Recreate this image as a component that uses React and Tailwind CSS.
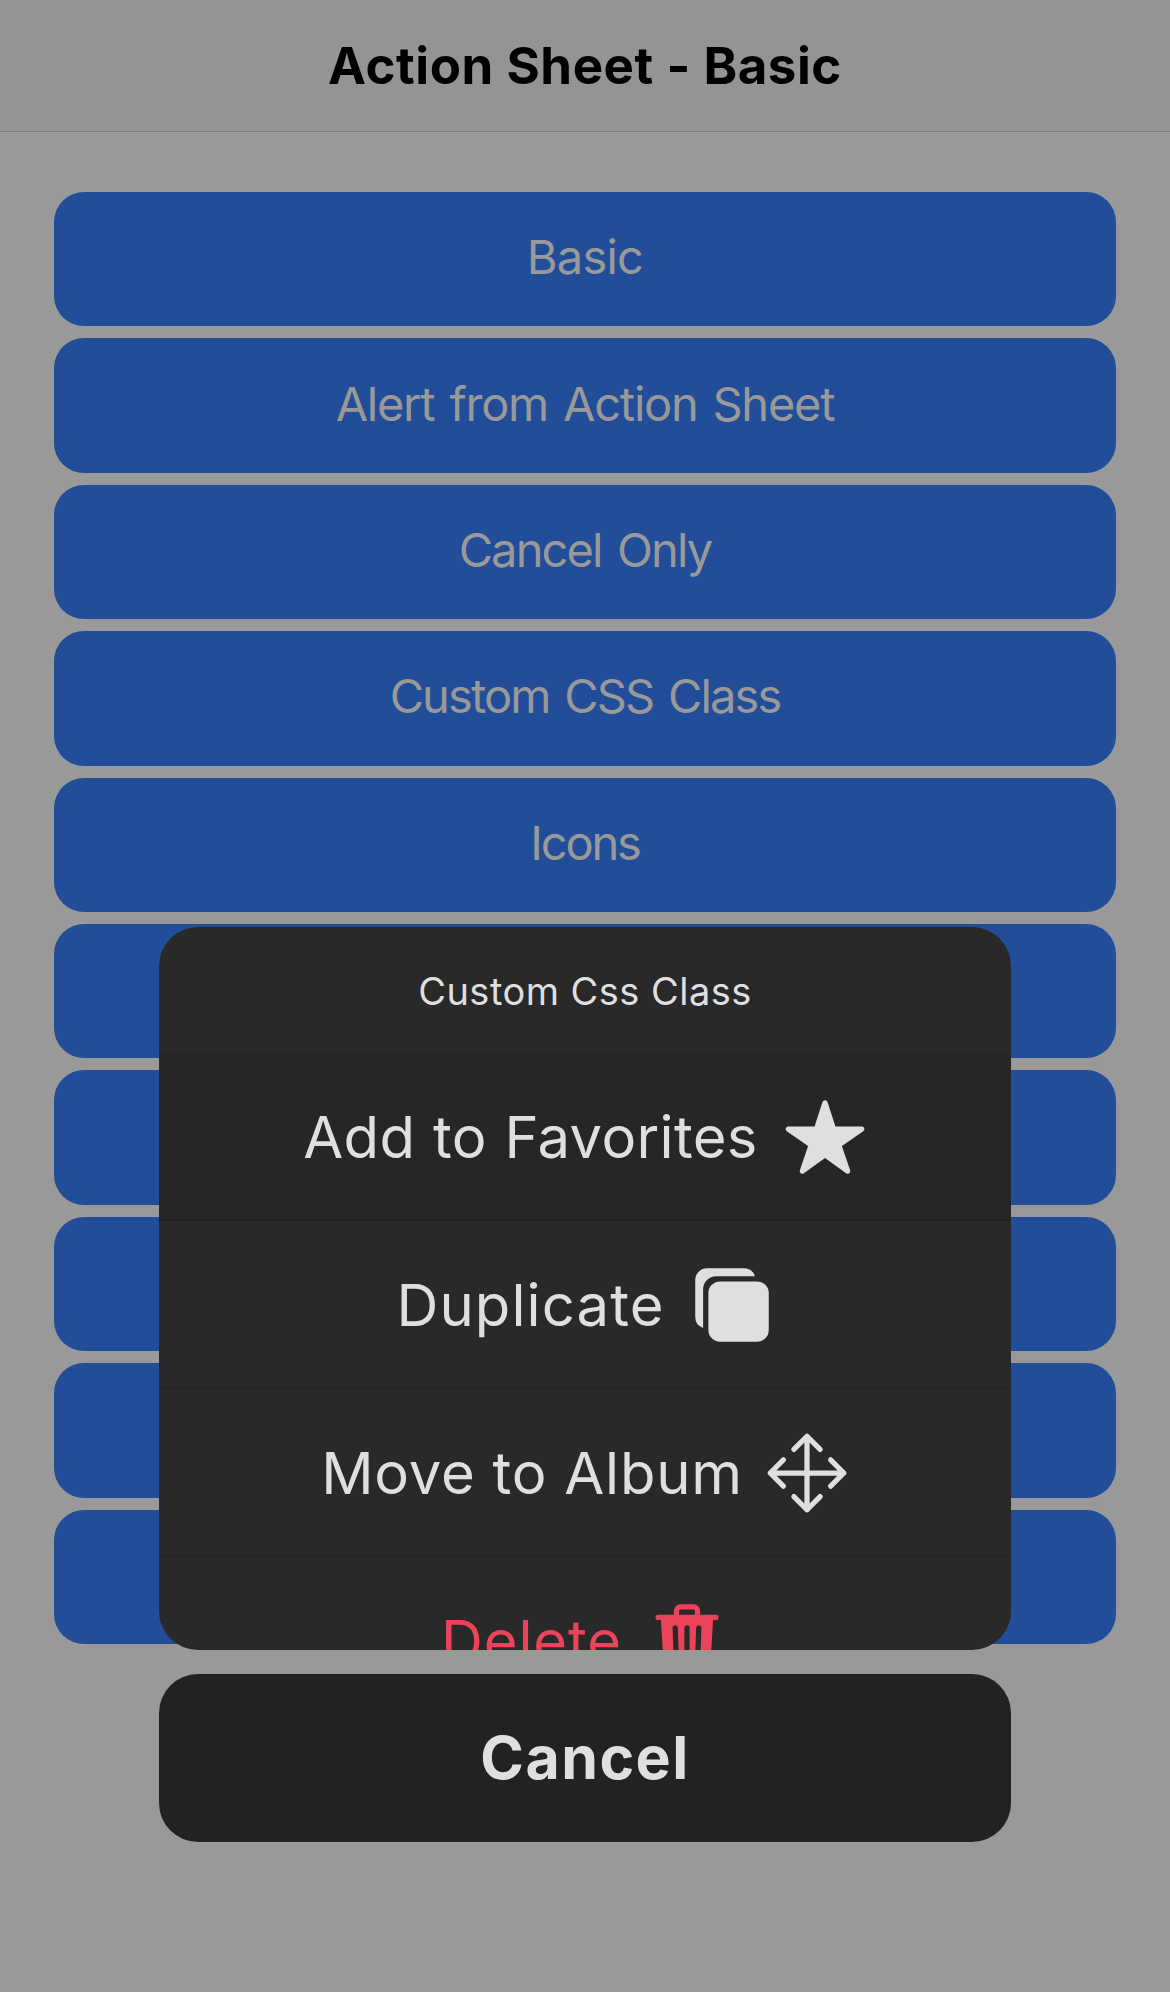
import { IoStar, IoCopy, IoMove, IoTrash } from 'react-icons/io5';

const pageButtons = [
  { label: 'Basic', tracking: 'tracking-[-0.78px]' },
  { label: 'Alert from Action Sheet', tracking: 'tracking-[-1.25px] [word-spacing:3px]' },
  { label: 'Cancel Only', tracking: 'tracking-[-1.85px] [word-spacing:4px]' },
  { label: 'Custom CSS Class', tracking: 'tracking-[-1.9px] [word-spacing:3.5px]' },
  { label: 'Icons', tracking: 'tracking-[-2.16px]' },
  { label: '', tracking: '' },
  { label: '', tracking: '' },
  { label: '', tracking: '' },
  { label: '', tracking: '' },
  { label: '', tracking: '' },
];

const actions = [
  { label: 'Add to Favorites', Icon: IoStar, style: 'gap-[25px] tracking-[0.33px] [word-spacing:1px] bg-[#262626] border-[#232323] text-[#dfdfdf]' },
  { label: 'Duplicate', Icon: IoCopy, style: 'gap-[25px] tracking-[1.1px] border-[#262626] text-[#dfdfdf]' },
  { label: 'Move to Album', Icon: IoMove, style: 'gap-[22px] tracking-[0.75px] border-[#262626] text-[#dfdfdf]' },
  { label: 'Delete', Icon: IoTrash, style: 'gap-[23px] tracking-[0.87px] border-[#262626] text-[#eb445a]' },
];

function ActionRow({ label, Icon, style }) {
  return (
    <button className={`flex h-[168px] w-full shrink-0 items-center justify-center border-b-2 pt-[2px] text-[58px] leading-none whitespace-nowrap ${style}`}>
      <span>{label}</span>
      <Icon className="size-[84px] shrink-0" />
    </button>
  );
}

export default function App() {
  return (
    <div className="relative h-[1992px] w-[1170px] overflow-hidden bg-[#999999] font-['Inter',sans-serif]">
      <header className="flex h-[132px] items-center justify-center border-b border-[#7a7a7a] bg-[#949494]">
        <h1 className="text-[51px] leading-none font-bold tracking-[0.55px] text-black">Action Sheet - Basic</h1>
      </header>

      <main className="flex flex-col gap-[12px] px-[54px] pt-[60px]">
        {pageButtons.map(({ label, tracking }, i) => (
          <button
            key={i}
            className={`flex h-[134.4px] w-full items-center justify-center rounded-[30px] bg-[#224d99] pb-[5px] text-[47px] leading-none text-[#999999] ${tracking}`}
          >
            {label}
          </button>
        ))}
      </main>

      <div className="absolute inset-x-[159px] top-[927px] flex flex-col gap-[24px]">
        <section className="flex h-[723px] flex-col overflow-hidden rounded-[39px] bg-[#292929]">
          <h2 className="flex h-[126px] shrink-0 items-center justify-center border-b-2 border-[#262626] pt-[4px] text-[38px] leading-none tracking-[0.47px] text-[#dfdfdf]">
            Custom Css Class
          </h2>
          {actions.map((action) => (
            <ActionRow key={action.label} {...action} />
          ))}
        </section>
        <button className="flex h-[168px] items-center justify-center rounded-[39px] bg-[#222222] pb-[2px] text-[59px] leading-none font-bold tracking-[1.5px] text-[#dfdfdf]">
          Cancel
        </button>
      </div>
    </div>
  );
}
